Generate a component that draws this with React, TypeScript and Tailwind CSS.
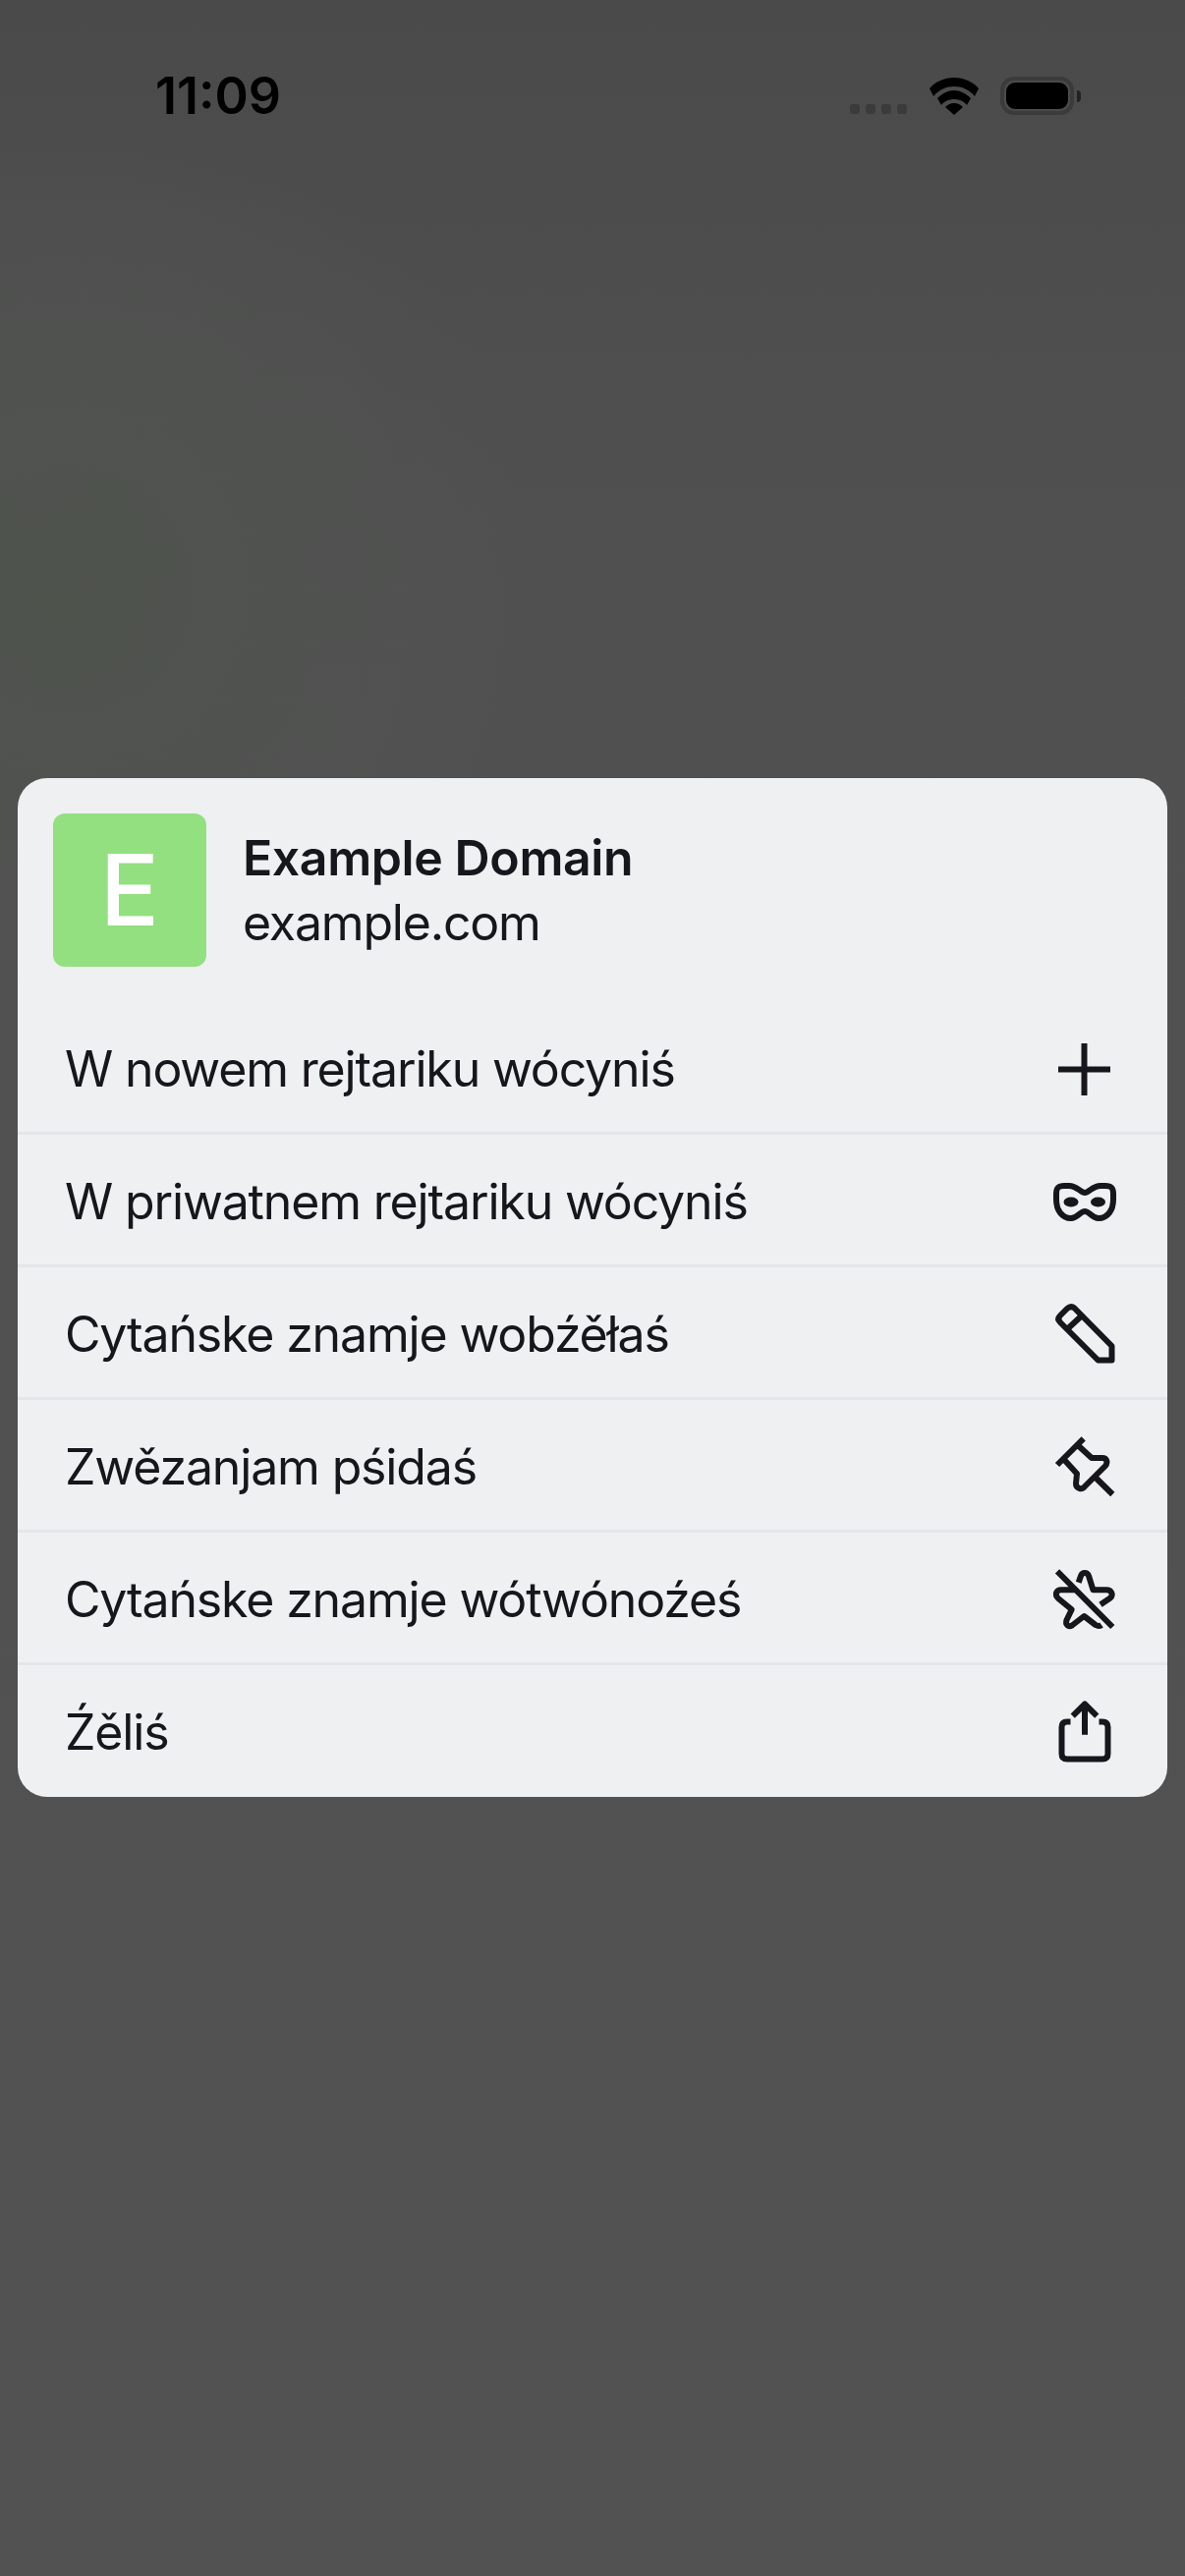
import type { ReactNode } from 'react';

const Plus = () => (
  <path d="M9 38.5H62M35.5 12V65" />
);

const Mask = () => (
  <>
    <path d="M36 29C32 29 28 22 20 22H15C9 22 7 24 7 30V36C7 47 13 55 22 55C29 55 31 48 36 48C41 48 43 55 50 55C59 55 65 47 65 36V30C65 24 63 22 57 22H52C44 22 40 29 36 29Z" />
    <ellipse cx="22" cy="38.5" rx="7.5" ry="5" fill="#16161c" stroke="none" />
    <ellipse cx="49.5" cy="38.5" rx="7.5" ry="5" fill="#16161c" stroke="none" />
  </>
);

const Pencil = () => (
  <path d="M25.5 11.5L63.5 50V64.5H49.5L11 26Q7.5 22.5 11 19L18 12Q22 8.5 25.5 11.5ZM31.5 20.5L17.5 33.5" />
);

const Pin = () => (
  <path d="M8 36L34.7 9.3M47 49L64.3 66M15.3 31L28 45L27 55C27 60 33 62 36 58L57 37C60 33 58 29 54 29H43L30 17" />
);

const StarOff = () => (
  <path d="M8 9.3L64.3 66M29.7 20.7L32 14C33.5 10 38.5 10 40 14L44.5 28.3H58C63 28.3 65.5 33 62 36.5L52 43.3M25.3 28.3H12C7 28.3 5 33 9 37L22.7 48.3L17.5 59C16 63.5 19 66.5 23 64.5L35.3 55L47 64C49.5 65.5 51 65.5 53 64" />
);

const Share = () => (
  <path d="M36 40.7V10M23.7 21.7L36 9.5L48.3 21.7M21.5 27.5H18Q12.5 27.5 12.5 33V60Q12.5 65.5 18 65.5H54Q59.5 65.5 59.5 60V33Q59.5 27.5 54 27.5H50.5" />
);

const items: { label: string; icon: ReactNode }[] = [
  { label: 'W nowem rejtariku wócyniś', icon: <Plus /> },
  { label: 'W priwatnem rejtariku wócyniś', icon: <Mask /> },
  { label: 'Cytańske znamje wobźěłaś', icon: <Pencil /> },
  { label: 'Zwězanjam pśidaś', icon: <Pin /> },
  { label: 'Cytańske znamje wótwónoźeś', icon: <StarOff /> },
  { label: 'Źěliś', icon: <Share /> },
];

export default function App() {
  return (
    <div className="w-[1206px] h-[2622px] flex flex-col overflow-hidden bg-[radial-gradient(circle_at_70px_600px,#4e534c_0px,#505250_220px,transparent_480px),linear-gradient(to_bottom,#4a4a4a,#505050_20%,#525252)] font-['Inter','Liberation_Sans',sans-serif]">
      {/* Status bar */}
      <div className="h-[792px] flex-shrink-0 flex items-start justify-between pl-[158px] pr-[106px] pt-[68px]">
        <span className="text-black text-[52px] leading-[60px] font-semibold">11:09</span>
        <div className="flex items-start">
          <div className="flex gap-[6px] mt-[38px]">
            <span className="w-[10px] h-[10px] rounded-[3px] bg-[#3b3b3b]" />
            <span className="w-[10px] h-[10px] rounded-[3px] bg-[#3b3b3b]" />
            <span className="w-[10px] h-[10px] rounded-[3px] bg-[#3b3b3b]" />
            <span className="w-[10px] h-[10px] rounded-[3px] bg-[#3b3b3b]" />
          </div>
          <svg className="w-[50px] h-[38px] ml-[23px] mt-[11px]" viewBox="0 0 50 38">
            <path d="M25 0C15 0 6 4 0 11L4 19C10 12 17 9 25 9C33 9 40 12 46 19L50 11C44 4 35 0 25 0ZM25 13C19 13 13 16 8 21L12 28C15 24 20 22 25 22C30 22 35 24 38 28L42 21C37 16 31 13 25 13ZM25 26C21 26 18 28 16 30L25 38L34 30C32 28 29 26 25 26Z" fill="#000" />
          </svg>
          <div className="flex items-center ml-[22px] mt-[10px]">
            <div className="w-[75px] h-[39px] rounded-[14px] border-[4px] border-[#3b3b3b] p-[2px]">
              <div className="w-full h-full rounded-[9px] bg-black" />
            </div>
            <div className="w-[4px] h-[12px] rounded-r-[4px] bg-[#222] ml-[3px]" />
          </div>
        </div>
      </div>

      {/* Menu card */}
      <div className="mx-[18px] w-[1170px] rounded-[30px] overflow-hidden bg-[#eff0f2] text-[#16161c]">
        <div className="flex items-center h-[228px] pl-[36px]">
          <div className="w-[156px] h-[156px] rounded-[12px] bg-[#92e07f] flex items-center justify-center text-white text-[100px] leading-none font-medium">E</div>
          <div className="ml-[37px] flex flex-col text-[50px] leading-[66px]">
            <span className="font-semibold tracking-[-0.4px]">Example Domain</span>
            <span className="tracking-[-1.2px]">example.com</span>
          </div>
        </div>
        {items.map((item) => (
          <div
            key={item.label}
            className="h-[135px] flex items-center justify-between pl-[48px] pr-[48px] border-b-[3px] border-[#e5e5ea] last:h-[134px] last:border-b-0 last:pb-[2px]"
          >
            <span className="pt-[3px] text-[50px] leading-[60px] tracking-[-1.15px]">{item.label}</span>
            <svg className="w-[72px] h-[72px] flex-shrink-0" viewBox="0 0 72 72" fill="none" stroke="#16161c" strokeWidth={6} strokeLinejoin="round">
              {item.icon}
            </svg>
          </div>
        ))}
      </div>
    </div>
  );
}
